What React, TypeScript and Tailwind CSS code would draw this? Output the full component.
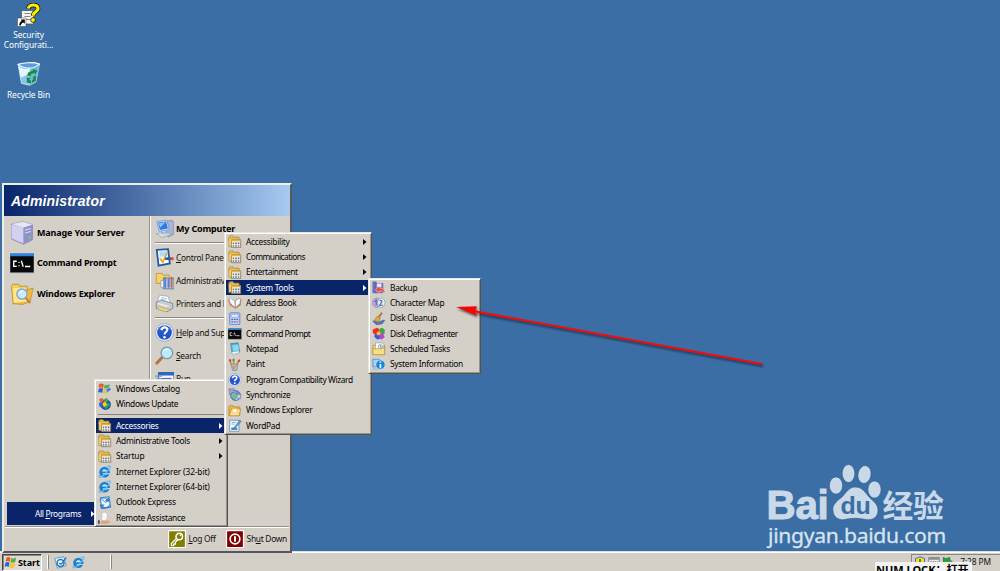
import type { ReactNode } from "react";

type IconName =
  | "folder" | "book" | "calc" | "cmd" | "notepad" | "paint" | "help" | "sync" | "explorer" | "wordpad"
  | "backup" | "charmap" | "cleanup" | "defrag" | "tasks" | "sysinfo" | "catalog" | "update" | "ie"
  | "outlook" | "remote" | "server" | "computer" | "control" | "admin" | "printer" | "search" | "run"
  | "question" | "bin" | "flag" | "key" | "power" | "shield" | "keyboard" | "plug" | "compose" | "find";

const art: Record<IconName, ReactNode> = {
  folder: (
    <>
      <path d="M1 2.500L2 1h4l1 1.500h6V6H1z" fill="#f0c850" stroke="#b08428" strokeWidth=".8" />
      <path d="M1 3.500h12v10H1z" fill="#f8dc78" stroke="#b08428" strokeWidth=".8" />
      <path d="M4 5.500h11V15H4z" fill="#fbfaf2" stroke="#7a6a3c" strokeWidth=".9" />
      <path d="M4 5.500h11v2H4z" fill="#e8b040" />
      <path d="M5.500 9h2v2h-2zM11.500 12h2v2h-2z" fill="#d95a3e" />
      <path d="M8.500 9h2v2h-2zM5.500 12h2v2h-2z" fill="#2a949e" />
      <path d="M11.500 9h2v2h-2zM8.500 12h2v2h-2z" fill="#4a6cc4" />
    </>
  ),
  book: (
    <>
      <path d="M0 4c3-2 6 0 8 3 1-4 5-5 8-3l-1 7-6 4-7-4z" fill="#d67a35" />
      <path d="M1 2.500c3 0 5 2 7 4.500l1 6.500C6 12 4 10 2.500 8zM8.500 7C10 4 12 3 15 3l-1 6-5 4.500z" fill="#fff" stroke="#7c94c8" strokeWidth=".7" />
    </>
  ),
  calc: (
    <>
      <rect x="2" y="1" width="12" height="14" rx="1" fill="#bcd2f7" stroke="#5a7ac8" />
      <path d="M4 3h8v3H4z" fill="#eef6ff" stroke="#5a7ac8" strokeWidth=".5" />
      <path d="M4 8h2v1.500H4zM7 8h2v1.500H7zM10 8h2v1.500h-2zM4 11h2v1.500H4zM7 11h2v1.500H7z" fill="#4b69bb" />
      <path d="M10 11h2v1.500h-2z" fill="#d65a5a" />
    </>
  ),
  cmd: (
    <>
      <path d="M0 2h16v12.500H0z" fill="#080808" stroke="#9ab" strokeWidth=".4" />
      <path d="M0 1.500h16v2H0z" fill="#2f83dc" />
      <path d="M4.500 6.800H2.500v3.400h2M6 7.300v.7M6 9.500v.7M7.500 6.500l1.300 4M10 10.300h3.500" fill="none" stroke="#fff" strokeWidth=".9" />
    </>
  ),
  notepad: (
    <>
      <path d="M3 2l9-1 2 11-9 2z" fill="#55b4dc" stroke="#3a80ad" strokeWidth=".8" />
      <path d="M5 4l7-1 1.200 7-6.700 1.500z" fill="#8cd8f0" />
      <path d="M3.500 12l9-1.500 1.500 2-8 2.500z" fill="#e9f4fa" stroke="#6b91a8" strokeWidth=".5" />
      <path d="M3 2.200l9-1" stroke="#777" strokeDasharray="1 1" />
    </>
  ),
  paint: (
    <>
      <path d="M4 8L2 2M7 8l-.500-7M10 8l4-6" stroke="#d89430" strokeWidth="1.800" />
      <path d="M2 1.500l1 3M13.800 2l-1.800 2.700" stroke="#bb3b30" strokeWidth="2" />
      <path d="M6.500 1v3" stroke="#3e954d" strokeWidth="2" />
      <path d="M3.500 7h8l-1 8h-5z" fill="#b1bfc7" stroke="#6d7a82" strokeWidth=".7" />
      <path d="M5 9l3 5M10 8l-3 4" stroke="#e77347" />
    </>
  ),
  help: (
    <>
      <circle cx="8" cy="8" r="7.500" fill="#f5f8ff" stroke="#94a6cc" strokeWidth=".8" />
      <circle cx="8" cy="8" r="6.200" fill="#2456c8" />
      <path d="M3.500 6c1-4 8-4 9 0-2-1.500-6-1-9 0z" fill="#6e9bec" />
      <path d="M5.700 6.200c0-3.700 5-3.200 4.600-.2C10 7.800 8 7.500 8 9.700" fill="none" stroke="#fff" strokeWidth="1.800" />
      <circle cx="8" cy="12" r="1.100" fill="#fff" />
    </>
  ),
  sync: (
    <>
      <circle cx="9" cy="9" r="6" fill="#5d8fd9" stroke="#51689e" strokeWidth=".7" />
      <path d="M5 6l5-1 3 3-2 4-3 2-4-4z" fill="#6fc488" />
      <path d="M1 1h7l-2 2c3 0 5 2 5 4l-3-1C7 5 6 5 4.500 5.500L2 8z" fill="#a5a0e4" stroke="#67609d" strokeWidth=".6" />
      <path d="M15 7v6l-2-1-3 3-2-1 3-3-2-2z" fill="#beccea" stroke="#5870a0" strokeWidth=".6" />
    </>
  ),
  explorer: (
    <>
      <path d="M1 3l1-1h4l1 1.500h7v10H1z" fill="#f2b93c" stroke="#bd7d2c" strokeWidth=".9" />
      <path d="M4 6h11l-2 8H1.500z" fill="#ffe58a" stroke="#bd7d2c" strokeWidth=".8" />
      <path d="M5 5.500h6v5H5z" fill="#fffdf0" stroke="#d3a345" strokeWidth=".6" />
    </>
  ),
  find: (
    <>
      <path d="M1 3l.8-1.500h4l.7 1.300h5L12 13l-10 1.500z" fill="#f5cf5c" stroke="#b58327" strokeWidth=".5" />
      <path d="M12 5l3.500-1-2 9-5 2-6.500-.500z" fill="#efb93a" stroke="#b58327" strokeWidth=".4" />
      <path d="M2 4h8.500l1 9-9 1z" fill="#fce68e" />
      <circle cx="8" cy="8" r="3.400" fill="#cfeafc" stroke="#86a9cc" strokeWidth="1" />
      <path d="M6 7.500c.5-1.500 2-2 3-1.500-1 .2-2 .7-3 1.500z" fill="#fff" />
      <path d="M10.400 10.600l3 3.400" stroke="#c27c34" strokeWidth="1.300" />
    </>
  ),
  wordpad: (
    <>
      <path d="M2 1.500h11v13H2z" fill="#fff" stroke="#648ab8" />
      <path d="M4 4h6M4 6h4M4 12h7" stroke="#6aa0ce" />
      <path d="M4 10h7v3H4z" fill="#3f96c4" />
      <path d="M14 1L8 9l-2 3 3-1.500L15.500 3z" fill="#5ba4d3" stroke="#386b93" strokeWidth=".6" />
    </>
  ),
  backup: (
    <>
      <path d="M1 1h4v13H1z" fill="#657bd2" stroke="#434f9b" strokeWidth=".6" />
      <path d="M4 3h9v11H4z" fill="#8d7fd1" stroke="#544696" strokeWidth=".6" />
      <path d="M6 3h5v4H6z" fill="#eeecff" />
      <path d="M4 10.500L9 6v2.500c4 0 7 2.500 6 6-1-2-3-3-6-3V14z" fill="#f0452b" stroke="#fff" strokeWidth=".4" />
    </>
  ),
  charmap: (
    <>
      <ellipse cx="5.500" cy="8" rx="5" ry="5.500" fill="#bca9e0" stroke="#8572aa" strokeWidth=".6" />
      <ellipse cx="11" cy="8" rx="4.500" ry="5.500" fill="#d9f0ed" stroke="#5c9ea0" strokeWidth=".7" />
      <path d="M3 7l2-2v6M9 6c2-2 4 0 2 2l-2 3h4" fill="none" stroke="#7651ac" strokeWidth="1.300" />
    </>
  ),
  cleanup: (
    <>
      <path d="M1 11l7-3 7 2-3 4-7 1z" fill="#5578b8" stroke="#46576e" strokeWidth=".7" />
      <path d="M2 10l7-3 5 2-5 2z" fill="#c9d7ef" />
      <path d="M12 1L8 6" stroke="#a36b35" strokeWidth="2" />
      <path d="M6 5l4 2-2 5-5-2z" fill="#e4aa41" stroke="#a2702e" strokeWidth=".7" />
    </>
  ),
  defrag: (
    <>
      <path d="M1 3l5-2 3 2v4L5 10 1 7z" fill="#f0282c" />
      <path d="M9 2l3-1 3 2v5l-4 1-2-2z" fill="#36ae3c" />
      <path d="M3 9l3-1 4 2v3l-3 2-4-3z" fill="#3459e2" />
      <path d="M9 8l4-1 2 5-4 3-2-2z" fill="#b344cc" />
      <path d="M7 5l3 1v3L7 10 5 8z" fill="#f4bd38" />
    </>
  ),
  tasks: (
    <>
      <path d="M1 4h14v11H1z" fill="#f7d775" stroke="#ab883d" strokeWidth=".8" />
      <path d="M4 1h8l2 2v7H4z" fill="#fff" stroke="#8d8a78" strokeWidth=".7" />
      <path d="M1 8h7l2-1h5v8H1z" fill="#fae07c" stroke="#b58e3c" strokeWidth=".8" />
      <circle cx="10" cy="5.500" r="2.500" fill="#eaf4ff" stroke="#587eaa" strokeWidth=".7" />
      <path d="M10 4v2h1.500" stroke="#333" strokeWidth=".6" fill="none" />
    </>
  ),
  sysinfo: (
    <>
      <path d="M1 1.500h8v9H1z" fill="#9fd0fa" stroke="#678ab5" />
      <path d="M1 12h8v2H1z" fill="#aebed5" />
      <circle cx="10" cy="8" r="5.500" fill="#1787dc" stroke="#dceeff" strokeWidth=".7" />
      <path d="M10 4v1.700M10 7v5" stroke="#fff" strokeWidth="2" />
    </>
  ),
  catalog: (
    <>
      <path d="M1 3c2-2 4-1 6 0l-1 4C4 6 3 6 1 7z" fill="#ea5c2c" />
      <path d="M8 3c2 1 4 1 6-1l-1 5c-2 1-4 1-6 0z" fill="#56ae48" />
      <path d="M1 8c2-1 3-1 5 0l-1 5c-2-1-3-1-5-1z" fill="#2c64c8" />
      <path d="M7 8c2 1 4 1 6 0l-1 5c-2 1-4 1-6 0z" fill="#f0c024" />
      <path d="M9 9l5-3 2 3-5 4z" fill="#4a80d7" stroke="#fff" strokeWidth=".5" />
    </>
  ),
  update: (
    <>
      <circle cx="9" cy="9" r="6.300" fill="#1c56ac" />
      <path d="M8 8l5-1 1 3-3 2-1 3-2-3z" fill="#3ba64a" />
      <path d="M1 3l4-2 2 3-3 3z" fill="#ee5c2f" />
      <path d="M7 3l4-2 1 4-3 2z" fill="#3bae4a" />
      <path d="M5 8l3-3 3 4-4 3z" fill="#ffc624" />
      <path d="M1 7l3-1 1 5-3 1z" fill="#3366d3" />
    </>
  ),
  ie: (
    <>
      <circle cx="7.800" cy="8.500" r="6.300" fill="#1b7fd2" />
      <path d="M4.800 7.600c.4-3 5.800-3 6.200 0z" fill="#d4ecfb" />
      <path d="M5.500 9.900h8.800v1h-3.800c-1 1.400-4.400 1.400-5-1z" fill="#d4ecfb" />
      <path d="M2 11.500c-2.500 5 2 3.500 6-.5s9-10 5.500-10c-1 0-3 1-4 2" fill="none" stroke="#6cbcf0" strokeWidth="1.400" />
    </>
  ),
  outlook: (
    <>
      <path d="M3 2l10-1 2 12-11 2z" fill="#eef7ff" stroke="#267dc8" strokeWidth="1.200" />
      <path d="M4 3l5 5 4-6" fill="none" stroke="#2c80c6" />
      <path d="M1 8c0-5 6-6 9-4L8 6l6 1-2-5-1 1C5 1 0 3 1 8zM14 9c-1 4-5 5-8 3l2-2H2l2 5 1-1c5 2 10 0 9-5z" fill="#2f7fd2" />
    </>
  ),
  remote: (
    <>
      <path d="M5 2c4-2 7 1 6 4l-1 6-6-1z" fill="#f8f8fa" stroke="#b8b8bd" strokeWidth=".8" />
      <path d="M3 12l8-1 4 2-4 2H4z" fill="#e4a36a" />
      <path d="M0 11h2v4H0z" fill="#3a4a70" />
    </>
  ),
  server: (
    <>
      <path d="M1 2l8-1.500 6 2v10L9 15.500 1 12z" fill="#aaa9dc" stroke="#7874ac" strokeWidth=".4" />
      <path d="M1 2l8-1.500 6 2-6 2z" fill="#e4e7f8" />
      <path d="M1 2.500l8 2v10.500l-8-3.500z" fill="#d2d1f0" />
      <path d="M9 4.500l6-2v10L9 15.500z" fill="#9190c9" />
      <path d="M10 6l4-1M10 8l4-1" stroke="#d8dafa" strokeWidth=".7" />
      <circle cx="13" cy="11" r=".8" fill="#64dd69" />
    </>
  ),
  computer: (
    <>
      <path d="M10 2l4-1 1.500 1v11l-4 2-3-2z" fill="#a9b4d6" stroke="#7989ad" strokeWidth=".6" />
      <path d="M1.500 2L10 1l2 8-8.500 1.500z" fill="#d5e8f8" stroke="#7897bd" strokeWidth=".7" />
      <path d="M2.500 3L9.300 2l1.600 6-6.700 1.200z" fill="#2a78ea" />
      <path d="M3 3.600l6-.9-4.500 4.500z" fill="#8cc4ff" />
      <path d="M6 10l3-.500 1 3H6zM1 12.500l8-1.500 5 2-8 2.500z" fill="#d8e0ed" stroke="#8294ae" strokeWidth=".5" />
    </>
  ),
  control: (
    <>
      <path d="M1.500 1.500L11 1l1.500 12-9.500 1.800z" fill="#fff" stroke="#1c5aa8" strokeWidth="1.500" />
      <path d="M3.500 3l6.300-.500.8 4-6.600 1z" fill="#b4dcf8" />
      <path d="M4 8.500l2.500 3.500L10 4" fill="none" stroke="#ecaa2c" strokeWidth="1.500" />
      <path d="M8.500 9h6" stroke="#255fa6" strokeWidth="2.200" />
      <circle cx="14.500" cy="9" r="1.400" fill="#d95240" />
    </>
  ),
  admin: (
    <>
      <path d="M1 2h5l1 1.500h5v7H1z" fill="#f6d163" stroke="#b89342" strokeWidth=".7" />
      <path d="M7 6h9v9H7z" fill="#b7c9dd" stroke="#567499" strokeWidth=".7" />
      <path d="M8.500 5v9M11.500 6v8" stroke="#5c84c8" strokeWidth="1.700" />
      <path d="M14 5v9" stroke="#d3613d" strokeWidth="1.500" />
      <path d="M5 8h2v6H5z" fill="#fff" stroke="#8795a8" strokeWidth=".6" />
    </>
  ),
  printer: (
    <>
      <path d="M2 6L4 1l7 1 2 6-5 3z" fill="#fff" stroke="#94a4b9" strokeWidth=".6" />
      <path d="M1 7l4-2 10 3v4l-5 3-9-3z" fill="#c6ccd4" stroke="#75808f" strokeWidth=".7" />
      <path d="M3 7.500l9 2.500-2 1-8-2.500z" fill="#f4f1de" />
      <path d="M5 3l5 1M5 4.500l4 1" stroke="#6ba9d1" strokeWidth=".6" />
      <path d="M3 10.500l6 2 4 .500-4 2-7-2.500z" fill="#f0da7a" stroke="#a89755" strokeWidth=".4" />
    </>
  ),
  search: (
    <>
      <path d="M.8 15.200l5.500-6" stroke="#b67536" strokeWidth="2.500" />
      <circle cx="10" cy="5.800" r="4.900" fill="#bee9fb" stroke="#7899b5" strokeWidth="1.100" />
      <path d="M7 5c1-3 4-3 5-2-2 0-4 1-5 2z" fill="#fff" />
    </>
  ),
  run: (
    <>
      <path d="M3 3h13v10H3z" fill="#f4f8ff" stroke="#3c649c" />
      <path d="M3 3h13v2.500H3z" fill="#2c68c8" />
      <path d="M0 6h6M1 8h5" stroke="#7796b9" />
      <path d="M6 8h8" stroke="#5275a5" />
    </>
  ),
  question: (
    <>
      <path d="M3 5h8v9H3z" fill="#f7f7f0" stroke="#555" strokeWidth=".5" />
      <path d="M5 7h4M5 9h4M5 11h4" stroke="#777" strokeWidth=".6" />
      <path d="M7.500 3.700C8 .5 14.500.5 14 4c-.3 2-3.300 2-3.300 4.500" fill="none" stroke="#161600" strokeWidth="3" />
      <path d="M7.500 3.700C8 .5 14.500.5 14 4c-.3 2-3.300 2-3.300 4.500" fill="none" stroke="#fff000" strokeWidth="2.100" />
      <circle cx="10.700" cy="11.300" r="1.600" fill="#fff000" stroke="#161600" strokeWidth=".5" />
      <path d="M.3 10h5.700v5.700H.3z" fill="#fff" stroke="#222" strokeWidth=".3" />
      <path d="M1.500 15c0-2 1-3 1.700-3l-.7-1H5.200v2.800l-.9-.8c-1 0-1.500 1-1.800 2z" fill="#000" />
    </>
  ),
  bin: (
    <>
      <path d="M1.300 2l9.700-1 4 1-2.300 11.500-4 2-5.200-1.200z" fill="#8cc2ee" stroke="#d8f0ff" strokeWidth=".5" />
      <path d="M9 4L15 2l-2.300 11.500-4 2z" fill="#74b2e4" />
      <path d="M1.300 2.200C5 1 11 .5 15 2c-2 1.500-4 3-7 2.500-3 0-5-.8-6.700-2.300z" fill="#5a9cd4" stroke="#eefaff" strokeWidth=".7" />
      <path d="M1.700 3.500C4 5 6 5.500 9 5c0 3-3 5-6 5.500z" fill="#f0faff" fillOpacity=".9" />
      <path d="M7.200 9.300l.6-2L11 6l-.3-.9 3 .9-1.400 2.700-.7-1-2 .8-.3 1.300zM12.600 9.200l.2 3.200-2.500 1.500v-1.600l.8-.5-.2-1.600zM9.500 14.200L7 13.800 6.800 10.500l2.400.2-.5.9.1.9.8-.1z" fill="#12922a" />
    </>
  ),
  flag: (
    <>
      <path d="M3 2c2-1 3-1 5 0L7 7c-2-1-3-1-5 0z" fill="#ee5326" />
      <path d="M9 2.500c2 1 4 1 6-1L14 7c-2 1.500-4 1.500-6 .5z" fill="#5daf3c" />
      <path d="M1.800 8c2-1 3-1 5 0l-1 5.500c-2-1-3-1-5 0z" fill="#2767d2" />
      <path d="M7.800 8.500c2 1 4 1 6-.500l-1 5.500c-2 1.500-4 1.500-6 .5z" fill="#f5c52f" />
    </>
  ),
  key: (
    <>
      <path d="M.5.500h15v15H.5z" fill="#817f00" stroke="#fff" />
      <circle cx="10" cy="5.800" r="2.900" fill="none" stroke="#fff" strokeWidth="1.300" />
      <path d="M8 7l-5 5v2h2v-1.500h1.500V11L9 8.500" fill="none" stroke="#fff" strokeWidth="1.100" />
      <circle cx="11" cy="4.800" r=".7" fill="#fff" />
    </>
  ),
  power: (
    <>
      <path d="M.5.500h15v15H.5z" fill="#800000" stroke="#fff" />
      <circle cx="8" cy="8" r="4.300" fill="none" stroke="#fff" strokeWidth="1.500" />
      <path d="M8 5.500v5" stroke="#fff" strokeWidth="1.700" />
    </>
  ),
  shield: (
    <>
      <path d="M8 1l6 2.500v6c0 3-4 5-6 6-2-1-6-3-6-6v-6z" fill="#f6df24" stroke="#5275bd" strokeWidth="1.400" />
      <path d="M8 4v5M8 11v2" stroke="#342f10" strokeWidth="1.600" />
    </>
  ),
  keyboard: (
    <>
      <path d="M1 2h14v12H1z" fill="#e8e8e8" stroke="#737373" />
      <path d="M1 2h14v3H1z" fill="#8d8d8d" />
      <path d="M3 8h2m1 0h2m1 0h2m1 0h1M3 11h2m1 0h4m1 0h2" stroke="#555" strokeWidth="1.500" />
    </>
  ),
  plug: (
    <>
      <path d="M2 2l4 2 5-2 1 5 3 4-4 3-3-4-6-1z" fill="#22a63b" stroke="#166d29" />
      <path d="M11 9l4-2M12 13l4 1" stroke="#777" strokeWidth="2" />
    </>
  ),
  compose: (
    <>
      <path d="M1 3l11-2 3 11-11 3z" fill="#eaf6fc" stroke="#4a90c8" />
      <circle cx="8" cy="8.500" r="4.300" fill="none" stroke="#207ac0" strokeWidth="1.900" />
      <path d="M6 9l3 1 6-8" fill="none" stroke="#31669c" strokeWidth="1.500" />
    </>
  ),
};

function Icon({ name, className = "size-3.5" }: { name: IconName; className?: string }) {
  return (
    <svg viewBox="0 0 16 16" aria-hidden="true" className={`shrink-0 ${className}`}>
      {art[name]}
    </svg>
  );
}

type Item = {
  label: string;
  icon: IconName;
  sub?: boolean;
  active?: boolean;
  divided?: boolean;
  tracking?: string;
};

const programs: Item[] = [
  { label: "Windows Catalog", icon: "catalog" },
  { label: "Windows Update", icon: "update", tracking: "tracking-[-0.34px]" },
  { label: "Accessories", icon: "folder", sub: true, active: true, divided: true },
  { label: "Administrative Tools", icon: "folder", sub: true },
  { label: "Startup", icon: "folder", sub: true, tracking: "tracking-[-0.1px]" },
  { label: "Internet Explorer (32-bit)", icon: "ie", tracking: "tracking-[-0.13px]" },
  { label: "Internet Explorer (64-bit)", icon: "ie", tracking: "tracking-[-0.13px]" },
  { label: "Outlook Express", icon: "outlook" },
  { label: "Remote Assistance", icon: "remote" },
];

const accessories: Item[] = [
  { label: "Accessibility", icon: "folder", sub: true },
  { label: "Communications", icon: "folder", sub: true, tracking: "tracking-[-0.56px]" },
  { label: "Entertainment", icon: "folder", sub: true, tracking: "tracking-[-0.4px]" },
  { label: "System Tools", icon: "folder", sub: true, active: true },
  { label: "Address Book", icon: "book" },
  { label: "Calculator", icon: "calc" },
  { label: "Command Prompt", icon: "cmd", tracking: "tracking-[-0.6px]" },
  { label: "Notepad", icon: "notepad" },
  { label: "Paint", icon: "paint" },
  { label: "Program Compatibility Wizard", icon: "help", tracking: "tracking-[-0.4px]" },
  { label: "Synchronize", icon: "sync" },
  { label: "Windows Explorer", icon: "explorer" },
  { label: "WordPad", icon: "wordpad" },
];

const systemTools: Item[] = [
  { label: "Backup", icon: "backup" },
  { label: "Character Map", icon: "charmap" },
  { label: "Disk Cleanup", icon: "cleanup", tracking: "tracking-[-0.35px]" },
  { label: "Disk Defragmenter", icon: "defrag", tracking: "tracking-[-0.4px]" },
  { label: "Scheduled Tasks", icon: "tasks" },
  { label: "System Information", icon: "sysinfo" },
];

function Arrow() {
  return (
    <svg viewBox="0 0 4 6" className="h-1.5 w-1 shrink-0">
      <path d="M0 0l3.500 3L0 6z" fill="currentColor" />
    </svg>
  );
}

function Menu({ items, className }: { items: Item[]; className: string }) {
  return (
    <div
      className={`absolute border border-t-[#e8e6e1] border-r-[#55534f] border-b-[#55534f] border-l-[#e8e6e1] bg-[#d4d0c8] p-px shadow-[inset_1px_1px_0_#fff,inset_-1px_-1px_0_#96938c] ${className}`}
    >
      {items.map((item) => (
        <div key={item.label}>
          {item.divided && <div className="mx-0.5 mt-[2.500px] mb-[3px] h-px border-t border-[#888580] bg-white" />}
          <div
            className={`flex h-[15.33px] items-center pr-[3px] pl-[2px] ${item.active ? "bg-[#0a246a] text-white" : "text-black"}`}
          >
            <Icon name={item.icon} className="size-[13.500px]" />
            <span className={`ml-[4.500px] flex-1 ${item.tracking ?? ""}`}>{item.label}</span>
            {item.sub && <Arrow />}
          </div>
        </div>
      ))}
    </div>
  );
}

function PinnedItem({ icon, label }: { icon: IconName; label: string }) {
  return (
    <div className="flex h-[30.5px] items-center gap-[3px] pl-[6px] font-bold">
      <Icon name={icon} className="size-6" />
      <span className="text-[9px] tracking-[-0.16px] text-black">{label}</span>
    </div>
  );
}

function PlaceItem({ icon, children, className = "" }: { icon: IconName; children: ReactNode; className?: string }) {
  return (
    <div className={`flex h-[23px] items-center gap-[2px] pl-[4px] ${className}`}>
      <Icon name={icon} className="size-[19px]" />
      <span>{children}</span>
    </div>
  );
}

function Rule() {
  return <div className="mx-1 my-[2px] h-0.5 border-t border-[#8a8780] bg-white" />;
}

function StartMenu() {
  return (
    <div className="absolute top-[183px] left-[2px] flex h-[370px] w-[290px] flex-col border-2 border-t-[#eeece7] border-r-[#55585c] border-b-[#55585c] border-l-[#eeece7] bg-[#d4d0c8]">
      <div className="flex h-[31px] shrink-0 items-center bg-linear-to-r from-[#0a246a] to-[#a6caf0] pl-[7px] font-['Liberation_Sans',sans-serif] text-[14px] font-bold tracking-[0.15px] text-white italic">
        Administrator
      </div>
      <div className="flex h-[310px]">
        <div className="flex w-[146px] flex-col border-r border-[#96938c] pt-[1.500px]">
          <PinnedItem icon="server" label="Manage Your Server" />
          <PinnedItem icon="cmd" label="Command Prompt" />
          <PinnedItem icon="find" label="Windows Explorer" />
          <div className="mt-auto mr-1 mb-[1px] ml-[3px] flex h-[23px] items-center bg-[#0a246a] pl-[28px] text-white">
            <span className="tracking-[-0.35px]">All <u>P</u>rograms</span>
          </div>
        </div>
        <div className="flex-1 border-l border-white pt-[1px]">
          <PlaceItem icon="computer" className="font-bold">
            <span className="text-[9px] tracking-[-0.18px] text-black">My Computer</span>
          </PlaceItem>
          <Rule />
          <PlaceItem icon="control"><u>C</u>ontrol Panel</PlaceItem>
          <PlaceItem icon="admin">Administrative Tools</PlaceItem>
          <PlaceItem icon="printer">Printers and Faxes</PlaceItem>
          <Rule />
          <PlaceItem icon="help"><u>H</u>elp and Support</PlaceItem>
          <PlaceItem icon="search"><u>S</u>earch</PlaceItem>
          <PlaceItem icon="run"><u>R</u>un...</PlaceItem>
        </div>
      </div>
      <div className="mx-px flex flex-1 items-center justify-end border-t border-[#96938c] pr-[2px] shadow-[inset_0_1px_0_#fff]">
        <Icon name="key" className="size-[18px]" />
        <span className="mr-[10px] ml-[2px]"><u>L</u>og Off</span>
        <Icon name="power" className="size-[18px]" />
        <span className="ml-[3px]">Sh<u>u</u>t Down</span>
      </div>
    </div>
  );
}

function Watermark() {
  return (
    <svg viewBox="0 0 190 90" className="pointer-events-none absolute top-[460px] left-[764px] h-[90px] w-[190px]">
      <g fill="#c9d9e8" stroke="#315f90" strokeWidth=".6">
        <ellipse cx="72" cy="25.500" rx="6.600" ry="8.600" />
        <ellipse cx="84.500" cy="13.500" rx="6.300" ry="9" />
        <ellipse cx="100.500" cy="14.500" rx="6.500" ry="9" transform="rotate(10 100.500 14.500)" />
        <ellipse cx="110.500" cy="29.500" rx="6.600" ry="8.600" />
        <path d="M91 27c-6 0-9 6-13 10-6 5-10 8-9 14 1 8 8 10 14 8 6-1 10-1 16 0 8 2 14 0 15-8 0-7-4-9-9-14-4-5-7-10-14-10z" />
      </g>
      <g fontFamily="Liberation Sans, sans-serif" fontWeight="700">
        <text x="2.500" y="58.500" fontSize="40" fill="#c9d9e8" stroke="#c9d9e8" strokeWidth="1" textLength="62" lengthAdjust="spacingAndGlyphs">Bai</text>
        <text x="76.500" y="54" fontSize="23" fill="#3a6ea5" textLength="30" lengthAdjust="spacingAndGlyphs">du</text>
      </g>
      <text x="118.500" y="56.500" fontSize="31" fontWeight="700" fontFamily="Noto Sans CJK SC, sans-serif" fill="#c9d9e8" textLength="61" lengthAdjust="spacingAndGlyphs">经验</text>
      <text x="4" y="83" fontSize="20.500" fontFamily="Noto Sans, sans-serif" fill="#d7e4ef" stroke="#d7e4ef" strokeWidth=".3" textLength="178" lengthAdjust="spacingAndGlyphs">jingyan.baidu.com</text>
    </svg>
  );
}

function RedArrow() {
  return (
    <svg viewBox="0 0 320 70" className="pointer-events-none absolute top-[300px] left-[450px] h-[70px] w-[320px] drop-shadow-[1px_2px_1px_rgba(0,0,0,0.55)]">
      <path d="M23 11l289 53" stroke="#f80808" strokeWidth="2.200" />
      <path d="M6 7l21-.800-2 4.800 1.500 4.500z" fill="#fb0404" />
    </svg>
  );
}

function Taskbar() {
  return (
    <div className="mt-auto flex h-[20px] items-stretch border-t border-[#e2dfd9] bg-[#d4d0c8] pt-[2px] pl-[2px] shadow-[inset_0_1px_0_#fff]">
      <div className="flex w-[40px] items-center gap-[1px] border border-t-[#45433f] border-r-white border-b-white border-l-[#45433f] bg-[#dedbd5] pl-[1px] shadow-[inset_1px_1px_0_#8a8780]">
        <Icon name="flag" className="size-[13px]" />
        <span className="text-[9px] font-bold tracking-[-0.1px] text-black">Start</span>
      </div>
      <div className="mt-[1px] ml-[5px] h-[14px] w-[2px] border-r border-[#888580] bg-white" />
      <div className="flex items-center gap-[5px] pl-[5px]">
        <Icon name="compose" className="size-[13px]" />
        <Icon name="ie" className="size-[13px]" />
      </div>
      <div className="mt-[1px] ml-[25px] h-[14px] w-[2px] border-r border-[#888580] bg-white" />
      <div className="ml-auto flex w-[89px] items-start border-t border-l border-[#8a8780] pt-[1px] pl-[2px]">
        <Icon name="shield" className="size-[12px]" />
        <Icon name="keyboard" className="ml-[2px] size-[12px]" />
        <Icon name="plug" className="ml-[2px] size-[11px]" />
        <span className="ml-auto pt-px pr-[9px] tracking-[-0.1px]">7:28 PM</span>
      </div>
    </div>
  );
}

export default function App() {
  return (
    <div className="relative flex h-[571px] w-[1000px] flex-col overflow-hidden bg-[#3a6ea5] font-['Noto_Sans','Noto_Sans_CJK_SC',sans-serif] text-[8.4px] leading-[10px] tracking-[-0.28px] whitespace-nowrap text-[#111]">
      <div className="flex w-[57px] flex-col items-center pt-[3px] text-center text-white">
        <Icon name="question" className="size-[24px]" />
        <span className="mt-[3px] tracking-[-0.1px]">Security<br />Configurati...</span>
        <Icon name="bin" className="mt-[11px] size-[25px]" />
        <span className="mt-[4px] tracking-[-0.1px]">Recycle Bin</span>
      </div>
      <Taskbar />
      <StartMenu />
      <svg viewBox="0 0 4 6" className="absolute top-[511px] left-[91px] h-1.5 w-1">
        <path d="M0 0l3.500 3L0 6z" fill="#fff" />
      </svg>
      <Menu items={programs} className="top-[379px] left-[94px] h-[148px] w-[134px]" />
      <Menu items={accessories} className="top-[232px] left-[224px] h-[203px] w-[148px]" />
      <Menu items={systemTools} className="top-[278px] left-[368px] h-[96px] w-[113px]" />
      <Watermark />
      <RedArrow />
      <div className="absolute top-[562px] left-[875px] flex h-[16px] w-[97px] items-center bg-[#f4f4f4] pl-px text-[11px] font-bold tracking-normal text-black">
        NUM LOCK：打开
      </div>
    </div>
  );
}
